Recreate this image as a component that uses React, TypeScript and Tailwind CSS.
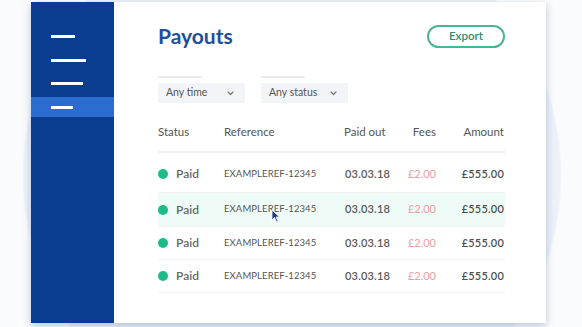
const rows = [0, 1, 2, 3]

function Chevron() {
    return (
        <svg width="7" height="5" viewBox="0 0 7 5" fill="none">
            <path d="M1 1l2.5 2.5L6 1" stroke="#777" strokeWidth="1.2" strokeLinecap="round" strokeLinejoin="round" />
        </svg>
    )
}

function Filter({ label, width }: { label: string; width: string }) {
    return (
        <div className="flex flex-col gap-[5px]">
            <div className="w-[44px] h-[2px] bg-[#e8eaee]" />
            <div className={`${width} h-[20px] bg-[#f3f4f7] flex items-center justify-between pl-[8px] pr-[11px] text-[10.5px] text-[#555]`}>
                <span>{label}</span>
                <Chevron />
            </div>
        </div>
    )
}

export default function App() {
    return (
        <div
            className="w-[582px] h-[327px] overflow-hidden bg-[radial-gradient(circle_at_292px_175px,#edf2fa_0,#edf2fa_268px,#fafbfd_270px)] pl-[31px] pt-[2px]"
            style={{ fontFamily: "Lato, 'Noto Sans', sans-serif" }}
        >
            <div className="w-[515px] h-[321px] flex bg-white shadow-[0_3px_8px_rgba(80,100,140,0.35)]">
                {/* sidebar */}
                <div className="w-[83px] bg-[#0b3d8e] flex flex-col pt-[33px]">
                    <div className="ml-[20px] w-[24px] h-[3px] bg-white" />
                    <div className="ml-[20px] mt-[21px] w-[35px] h-[3px] bg-white" />
                    <div className="ml-[20px] mt-[20px] w-[32px] h-[3px] bg-white" />
                    <div className="mt-[12px] h-[20px] bg-[#2a6ccf] flex items-center">
                        <div className="ml-[20px] w-[22px] h-[3px] bg-white" />
                    </div>
                </div>

                {/* main */}
                <div className="flex-1 pl-[44px] pr-[41px] pt-[22px]">
                    <div className="flex items-center justify-between h-[24px]">
                        <h1 className="text-[21px] font-bold text-[#1d4f9c] leading-none -mt-[1px]">Payouts</h1>
                        <button className="w-[78px] h-[23px] rounded-full border-2 border-[#4cb395] text-[11.5px] font-semibold text-[#2b8d6e] flex items-center justify-center">
                            Export
                        </button>
                    </div>

                    <div className="flex gap-[16px] mt-[28px]">
                        <Filter label="Any time" width="w-[87px]" />
                        <Filter label="Any status" width="w-[87px]" />
                    </div>

                    <div className="grid grid-cols-[66px_120px_56px_36px_69px] items-center h-[40px] mt-[10px] border-b-2 border-[#eceef1] text-[11.5px] text-[#555]">
                        <span>Status</span>
                        <span>Reference</span>
                        <span>Paid out</span>
                        <span className="text-right">Fees</span>
                        <span className="text-right pr-[1px]">Amount</span>
                    </div>

                    {rows.map((i) => (
                        <div
                            key={i}
                            className={`relative grid grid-cols-[66px_120px_56px_36px_69px] items-center border-b border-[#f1f2f4] ${i === 0 ? "h-[40px] pt-[3px]" : i === 1 ? "h-[34px] bg-[#eefbf7]" : "h-[33px]"}`}
                        >
                            <div className="flex items-center gap-[8px]">
                                <span className="w-[10px] h-[10px] rounded-full bg-[#1dbb8a]" />
                                <span className="text-[12px] font-semibold text-[#666]">Paid</span>
                            </div>
                            <span className="text-[9.5px] text-[#555] tracking-[0.1px]">EXAMPLEREF-12345</span>
                            <span className="text-[11px] font-semibold text-[#5a5a5a] pl-[1px] tracking-[0.2px]">03.03.18</span>
                            <span className="text-[11px] text-[#e8a0a0] text-right">£2.00</span>
                            <span className="text-[11px] font-semibold text-[#4f4f4f] text-right pr-[1px] tracking-[0.2px]">£555.00</span>
                            {i === 1 && (
                                <svg className="absolute left-[113px] top-[16px]" width="10" height="14" viewBox="0 0 10 14">
                                    <path d="M1 1v10l2.5-2.5 2 4.5 1.6-.7-2-4.3H8.5z" fill="#1c3f7a" stroke="#fff" strokeWidth="0.8" />
                                </svg>
                            )}
                        </div>
                    ))}
                </div>
            </div>
        </div>
    )
}
